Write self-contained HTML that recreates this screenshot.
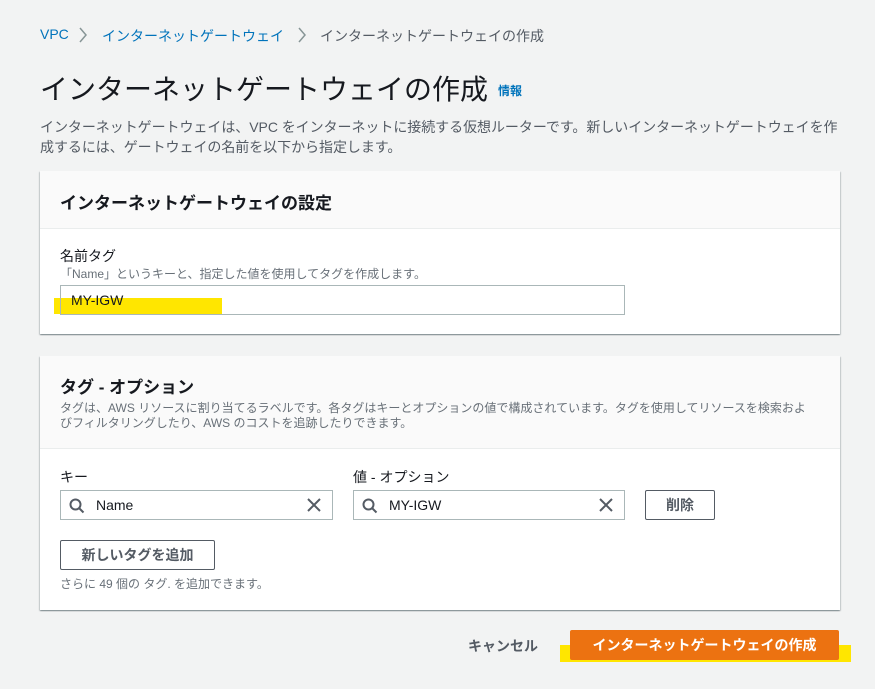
<!DOCTYPE html>
<html><head><meta charset="utf-8"><style>
*{box-sizing:border-box;margin:0;padding:0}
body{width:875px;height:689px;background:#f2f3f3;font-family:"Liberation Sans","Noto Sans CJK JP",sans-serif;color:#16191f;position:relative;overflow:hidden}
.a{position:absolute;white-space:nowrap}
.card{position:absolute;left:40px;width:800px;background:#fff;box-shadow:0 1px 1px 0 rgba(0,28,36,.3),1px 1px 1px 0 rgba(0,28,36,.15),-1px 1px 1px 0 rgba(0,28,36,.15)}
.hd{background:#fafafa;border-bottom:1px solid #eaeded;position:absolute;left:0;top:0;width:800px}
.inp{position:absolute;border:1px solid #aab7b8;background:#fff;height:30px;font-size:14px;line-height:28px}
.btn{position:absolute;border:1px solid #545b64;background:#fff;font-weight:bold;font-size:14px;text-align:center;line-height:28px;color:#545b64;border-radius:2px}
</style></head><body>
<div class="a" style="left:40px;top:26px;font-size:14px;color:#0073bb">VPC</div>
<svg class="a" style="left:78px;top:27px" width="10" height="16" viewBox="0 0 10 16" fill="none" stroke="#879596" stroke-width="1.5"><path d="M2 1l6 7-6 7"/></svg>
<div class="a" style="left:102px;top:26px;font-size:14px;color:#0073bb">インターネットゲートウェイ</div>
<svg class="a" style="left:297px;top:27px" width="10" height="16" viewBox="0 0 10 16" fill="none" stroke="#879596" stroke-width="1.5"><path d="M2 1l6 7-6 7"/></svg>
<div class="a" style="left:320px;top:26px;font-size:14px;color:#545b64">インターネットゲートウェイの作成</div>
<div class="a" style="left:40px;top:68px;font-size:28px;color:#16191f">インターネットゲートウェイの作成</div>
<div class="a" style="left:498px;top:82px;font-size:12px;font-weight:bold;color:#0073bb">情報</div>
<div class="a" style="left:40px;top:117px;font-size:14px;color:#545b64;line-height:20px;letter-spacing:-0.05px">インターネットゲートウェイは、VPC をインターネットに接続する仮想ルーターです。新しいインターネットゲートウェイを作<br>成するには、ゲートウェイの名前を以下から指定します。</div>

<div class="card" style="top:171px;height:163px">
<div class="hd" style="height:58px"><div class="a" style="left:20px;top:18px;font-size:17px;font-weight:bold">インターネットゲートウェイの設定</div></div>
<div class="a" style="left:20px;top:75px;font-size:14px">名前タグ</div>
<div class="a" style="left:20px;top:94px;font-size:12px;color:#687078">「Name」というキーと、指定した値を使用してタグを作成します。</div>
<div style="position:absolute;left:14px;top:127px;width:168px;height:16px;background:#ffe600"></div>
<div class="inp" style="left:20px;top:114px;width:565px;padding-left:10px;background:transparent">MY-IGW</div>
</div>

<div class="card" style="top:356px;height:254px">
<div class="hd" style="height:93px">
<div class="a" style="left:20px;top:17px;font-size:17px;font-weight:bold">タグ - オプション</div>
<div class="a" style="left:20px;top:45px;font-size:12px;color:#687078;line-height:15px">タグは、AWS リソースに割り当てるラベルです。各タグはキーとオプションの値で構成されています。タグを使用してリソースを検索およ<br>びフィルタリングしたり、AWS のコストを追跡したりできます。</div>
</div>
<div class="a" style="left:20px;top:111px;font-size:14px">キー</div>
<div class="a" style="left:313px;top:111px;font-size:14px">値 - オプション</div>
<div class="inp" style="left:20px;top:134px;width:273px;padding-left:35px">Name</div>
<div class="inp" style="left:313px;top:134px;width:272px;padding-left:35px">MY-IGW</div>
<svg class="a" style="left:29px;top:142px" width="16" height="16" viewBox="0 0 16 16" fill="none" stroke="#545b64" stroke-width="2"><circle cx="6.5" cy="6.5" r="5"/><path d="M10 10l4.5 4.5"/></svg>
<svg class="a" style="left:322px;top:142px" width="16" height="16" viewBox="0 0 16 16" fill="none" stroke="#545b64" stroke-width="2"><circle cx="6.5" cy="6.5" r="5"/><path d="M10 10l4.5 4.5"/></svg>
<svg class="a" style="left:267px;top:142px" width="14" height="14" viewBox="0 0 14 14" stroke="#545b64" stroke-width="2"><path d="M1 1l12 12M13 1L1 13"/></svg>
<svg class="a" style="left:559px;top:142px" width="14" height="14" viewBox="0 0 14 14" stroke="#545b64" stroke-width="2"><path d="M1 1l12 12M13 1L1 13"/></svg>
<div class="btn" style="left:605px;top:134px;width:70px;height:30px">削除</div>
<div class="btn" style="left:20px;top:184px;width:155px;height:30px">新しいタグを追加</div>
<div class="a" style="left:20px;top:219px;font-size:12px;color:#687078">さらに 49 個の タグ. を追加できます。</div>
</div>

<div class="a" style="left:468px;top:636px;font-size:14px;font-weight:bold;color:#545b64">キャンセル</div>
<div style="position:absolute;left:560px;top:645px;width:291px;height:17px;background:#ffe600"></div>
<div class="a" style="left:570px;top:630px;width:269px;height:30px;background:#ec7211;border-radius:2px;color:#fff;font-weight:bold;font-size:14px;text-align:center;line-height:30px">インターネットゲートウェイの作成</div>
</body></html>
